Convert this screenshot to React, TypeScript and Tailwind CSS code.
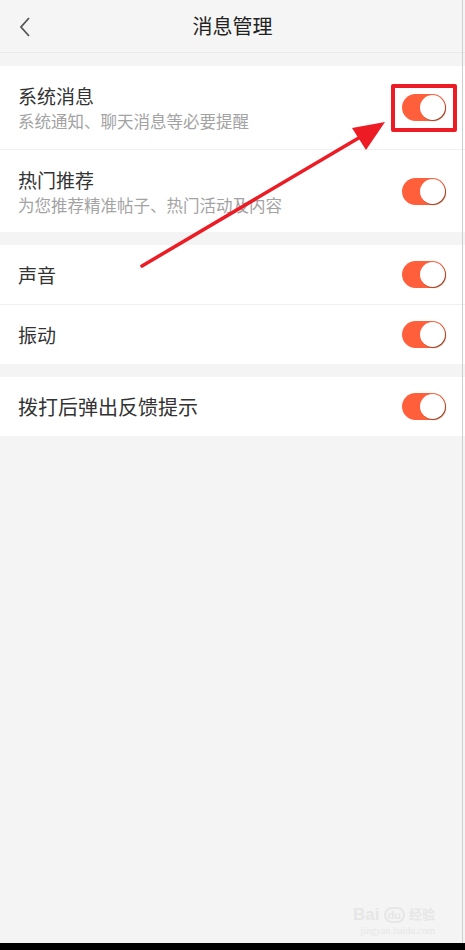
import React from "react";

const font = { fontFamily: '"Noto Sans CJK SC", "Noto Sans", sans-serif' };

function Toggle() {
  return (
    <div className="relative h-[27px] w-[44px] rounded-full bg-[#ff5f3b]">
      <div className="absolute right-[1px] top-[1px] h-[25px] w-[25px] rounded-full bg-white shadow-[1px_1px_1px_rgba(120,50,20,0.7)]" />
    </div>
  );
}

function Row({ title, sub, h, border, size }: { title: string; sub?: string; h: string; border?: boolean; size?: string }) {
  return (
    <div className={`flex items-center justify-between pl-[18px] pr-[19px] ${h} ${border ? "border-b border-[#f0f0f0]" : ""}`}>
      <div className="flex flex-col">
        <div className={`${size ?? "text-[19px]"} leading-[26px] text-[#333]`}>{title}</div>
        {sub && <div className="mt-[1px] text-[16.5px] leading-[22px] text-[#a3a3a3]">{sub}</div>}
      </div>
      <Toggle />
    </div>
  );
}

export default function App() {
  return (
    <div className="relative flex h-[950px] w-[465px] flex-col overflow-hidden bg-[#f4f4f4]" style={font}>
      <div className="relative flex h-[53px] items-center justify-center border-b border-[#e9e9e9] bg-[#f5f5f5]">
        <svg className="absolute left-[18px] top-[16px]" width="14" height="22" viewBox="0 0 14 22">
          <path d="M11 2 L3 11 L11 20" fill="none" stroke="#555" strokeWidth="1.8" />
        </svg>
        <div className="text-[20px] text-[#222]">消息管理</div>
      </div>
      <div className="mt-[13px] bg-white">
        <Row title="系统消息" sub="系统通知、聊天消息等必要提醒" h="h-[84px]" border />
        <Row title="热门推荐" sub="为您推荐精准帖子、热门活动及内容" h="h-[82px]" />
      </div>
      <div className="mt-[13px] bg-white">
        <Row title="声音" h="h-[60px]" border />
        <Row title="振动" h="h-[59px]" />
      </div>
      <div className="mt-[13px] bg-white">
        <Row title="拨打后弹出反馈提示" h="h-[59px]" size="text-[20px]" />
      </div>
      <div className="flex-1" />
      <div className="flex flex-col items-end pb-[6px] pr-[30px] text-[#e6e6e6]">
        <div className="flex items-center gap-1 text-[17px] font-bold leading-[20px]" style={{ fontFamily: '"Liberation Sans", "Noto Sans CJK SC", sans-serif' }}>
          <span>Bai</span>
          <span className="rounded-full border-2 border-[#e6e6e6] px-[2px] text-[11px] leading-[12px]">du</span>
          <span className="text-[13px]">经验</span>
        </div>
        <div className="text-[10px] leading-[12px]" style={{ fontFamily: '"Liberation Serif", serif' }}>jingyan.baidu.com</div>
      </div>
      <div className="h-[7px] bg-black" />
      <div className="pointer-events-none absolute right-[2px] top-0 h-[943px] w-px bg-[#cfcfcf]" />
      <div className="pointer-events-none absolute left-[391px] top-[84px] h-[48px] w-[66px] rounded-[2px] border-[4px] border-[#ed1c24]" />
      <svg className="pointer-events-none absolute left-0 top-0" width="465" height="950">
        <line x1="142" y1="266" x2="362" y2="136" stroke="#ed1c24" strokeWidth="3.5" strokeLinecap="round" />
        <polygon points="385,122 352,128 366,150" fill="#ed1c24" />
      </svg>
    </div>
  );
}
